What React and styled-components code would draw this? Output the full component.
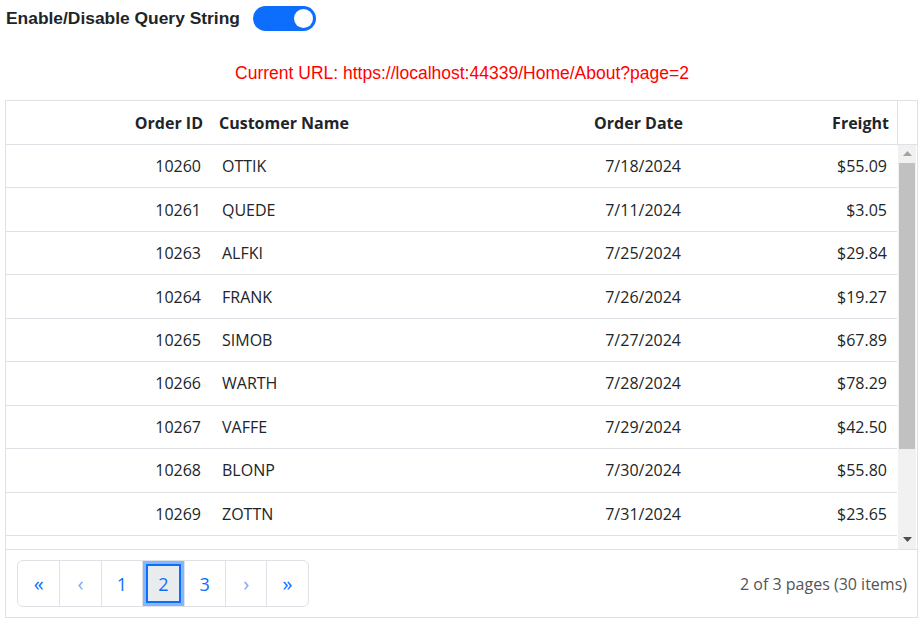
import React from "react";
import styled, { createGlobalStyle } from "styled-components";

const GlobalStyle = createGlobalStyle`
  html, body { margin: 0; padding: 0; background: #fff; }
  body { font-family: "Open Sans", "Noto Sans", sans-serif; color: #212529; }
  * { box-sizing: border-box; }
`;

const Page = styled.div`
  width: 920px;
  padding: 6px 3px 0 5px;
`;

const TopBar = styled.div`
  display: flex;
  align-items: center;
  height: 25px;
  padding-left: 1px;
`;

const Title = styled.span`
  font-family: "Liberation Sans", Arial, sans-serif;
  font-weight: bold;
  font-size: 17.4px;
  color: #212529;
`;

const Switch = styled.div`
  margin-left: 13px;
  width: 63px;
  height: 25px;
  border-radius: 13px;
  background: #0d6efd;
  display: flex;
  align-items: center;
  justify-content: flex-end;
  padding-right: 3px;
`;

const Knob = styled.div`
  width: 19px;
  height: 19px;
  border-radius: 50%;
  background: #fff;
`;

const UrlLine = styled.div`
  margin: 33px 0 18px;
  height: 18px;
  line-height: 18px;
  text-align: center;
  color: #ff0000;
  font-family: "Liberation Sans", Arial, sans-serif;
  font-size: 17.5px;
  padding-left: 2px;
`;

const Grid = styled.div`
  width: 913px;
  border: 1px solid #dee2e6;
  background: #fff;
`;

const cols = "205px 240px 240px 206px";

const HeaderRow = styled.div`
  display: grid;
  grid-template-columns: ${cols} 1fr;
  height: 44px;
  border-bottom: 1px solid #dee2e6;
`;

const HeadCell = styled.div`
  display: flex;
  align-items: center;
  justify-content: ${(p) => (p.$right ? "flex-end" : "flex-start")};
  padding: 0 8px;
  font-weight: 700;
  font-size: 16px;
  color: #212529;
  white-space: nowrap;
`;

const HeadSpacer = styled.div`
  border-left: 1px solid #dee2e6;
`;

const Body = styled.div`
  display: flex;
  height: 404px;
`;

const Rows = styled.div`
  width: 891px;
  overflow: hidden;
`;

const Row = styled.div`
  display: grid;
  grid-template-columns: ${cols};
  height: 43.45px;
  border-bottom: 1px solid #dee2e6;
`;

const Cell = styled.div`
  display: flex;
  align-items: center;
  justify-content: ${(p) => (p.$right ? "flex-end" : "flex-start")};
  padding: 0 ${(p) => (p.$right ? "10px" : "11px")};
  font-size: 16px;
  color: #212529;
  white-space: nowrap;
`;

const ScrollBar = styled.div`
  width: 18px;
  margin-left: 1px;
  background: #f1f1f1;
  display: flex;
  flex-direction: column;
  align-items: center;
`;

const Arrow = styled.div`
  height: 18px;
  width: 100%;
  display: flex;
  align-items: center;
  justify-content: center;
  margin-top: ${(p) => (p.$down ? "auto" : "0")};
`;

const Thumb = styled.div`
  width: 16px;
  height: 286px;
  background: #c1c1c1;
`;

const Footer = styled.div`
  border-top: 1px solid #dee2e6;
  display: flex;
  align-items: center;
  justify-content: space-between;
  padding: 10px 10px 10px 11px;
  height: 68px;
`;

const Pager = styled.div`
  display: flex;
  border: 1px solid #dee2e6;
  border-radius: 6px;
  height: 47px;
  overflow: hidden;
`;

const PageBtn = styled.div`
  width: 41.4px;
  display: flex;
  align-items: center;
  justify-content: center;
  font-size: ${(p) => (p.$glyph ? "20px" : "18px")};
  font-weight: ${(p) => (p.$bold ? 500 : 400)};
  color: ${(p) => (p.$light ? "#7aa9f7" : "#0d6efd")};
  border-left: 1px solid #dee2e6;
  &:first-child { border-left: none; }
  ${(p) =>
    p.$active &&
    `
    background: #e9ecef;
    box-shadow: inset 0 0 0 3px #86b7fe, inset 0 0 0 5px #0d6efd;
  `}
`;

const PageInfo = styled.div`
  font-size: 16px;
  color: #555;
`;

const data = [
  ["10260", "OTTIK", "7/18/2024", "$55.09"],
  ["10261", "QUEDE", "7/11/2024", "$3.05"],
  ["10263", "ALFKI", "7/25/2024", "$29.84"],
  ["10264", "FRANK", "7/26/2024", "$19.27"],
  ["10265", "SIMOB", "7/27/2024", "$67.89"],
  ["10266", "WARTH", "7/28/2024", "$78.29"],
  ["10267", "VAFFE", "7/29/2024", "$42.50"],
  ["10268", "BLONP", "7/30/2024", "$55.80"],
  ["10269", "ZOTTN", "7/31/2024", "$23.65"],
];

const Tri = ({ down, color }) => (
  <svg width="9" height="6" viewBox="0 0 9 6">
    {down ? (
      <path d="M0 0 L9 0 L4.5 5 Z" fill={color} />
    ) : (
      <path d="M0 5 L9 5 L4.5 0 Z" fill={color} />
    )}
  </svg>
);

export default function App() {
  return (
    <Page>
      <GlobalStyle />
      <TopBar>
        <Title>Enable/Disable Query String</Title>
        <Switch>
          <Knob />
        </Switch>
      </TopBar>
      <UrlLine>Current URL: https://localhost:44339/Home/About?page=2</UrlLine>
      <Grid>
        <HeaderRow>
          <HeadCell $right>Order ID</HeadCell>
          <HeadCell>Customer Name</HeadCell>
          <HeadCell $right>Order Date</HeadCell>
          <HeadCell $right>Freight</HeadCell>
          <HeadSpacer />
        </HeaderRow>
        <Body>
          <Rows>
            {data.map((r) => (
              <Row key={r[0]}>
                <Cell $right>{r[0]}</Cell>
                <Cell>{r[1]}</Cell>
                <Cell $right>{r[2]}</Cell>
                <Cell $right>{r[3]}</Cell>
              </Row>
            ))}
          </Rows>
          <ScrollBar>
            <Arrow>
              <Tri color="#a3a3a3" />
            </Arrow>
            <Thumb />
            <Arrow $down>
              <Tri down color="#505050" />
            </Arrow>
          </ScrollBar>
        </Body>
        <Footer>
          <Pager>
            <PageBtn $glyph $bold>«</PageBtn>
            <PageBtn $glyph $light>‹</PageBtn>
            <PageBtn>1</PageBtn>
            <PageBtn $active>2</PageBtn>
            <PageBtn>3</PageBtn>
            <PageBtn $glyph $light>›</PageBtn>
            <PageBtn $glyph $bold>»</PageBtn>
          </Pager>
          <PageInfo>2 of 3 pages (30 items)</PageInfo>
        </Footer>
      </Grid>
    </Page>
  );
}
